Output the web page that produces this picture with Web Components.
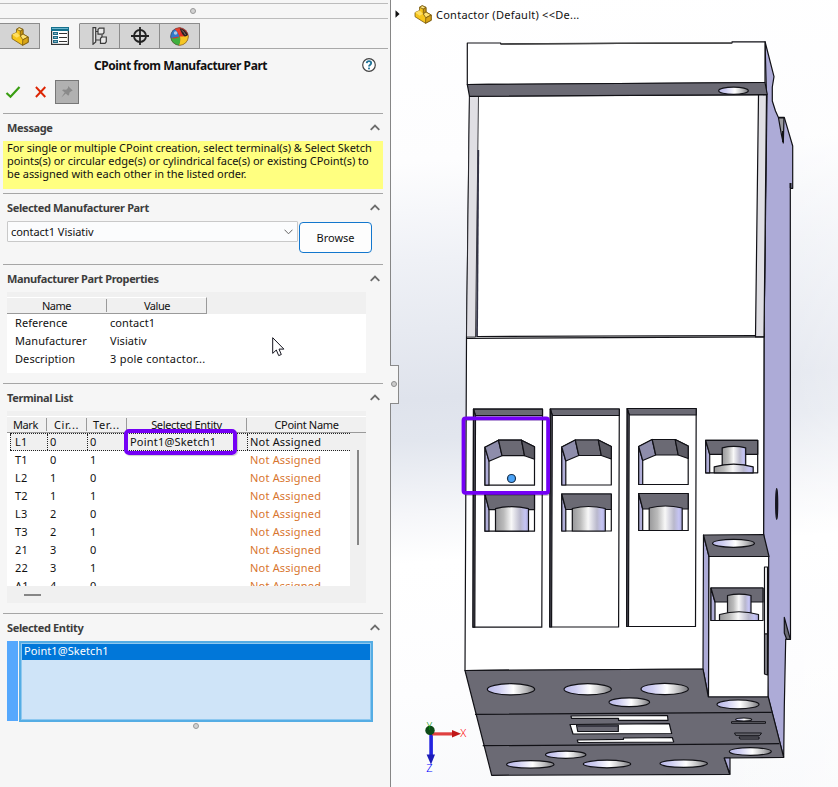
<!DOCTYPE html>
<html lang="en">
<head>
<meta charset="utf-8">
<title>Contactor</title>
<style>
body {
    margin: 0;
    width: 838px;
    height: 787px;
    overflow: hidden;
    font: 11px/13px "Noto Sans", "Open Sans", sans-serif;
    color: #111;
}
</style>
</head>
<body>
<cad-app>
    <property-manager slot="panel" heading="CPoint from Manufacturer Part">
        <panel-group heading="Message" style="height: 80px">
            <message-box>For single or multiple CPoint creation, select terminal(s) &amp; Select Sketch<br>points(s) or circular edge(s) or cylindrical face(s) or existing CPoint(s) to<br>be assigned with each other in the listed order.</message-box>
        </panel-group>
        <panel-group heading="Selected Manufacturer Part" style="height: 71px">
            <part-picker value="contact1 Visiativ"></part-picker>
        </panel-group>
        <panel-group heading="Manufacturer Part Properties" style="height: 119px">
            <part-properties></part-properties>
        </panel-group>
        <panel-group heading="Terminal List" style="height: 230px">
            <terminal-list></terminal-list>
        </panel-group>
        <panel-group heading="Selected Entity" style="height: 110px">
            <selection-box>Point1@Sketch1</selection-box>
        </panel-group>
    </property-manager>
    <model-view slot="view" name="Contactor (Default) &lt;&lt;De..."></model-view>
</cad-app>

<script>
const define = (name, html, setup) => {
    const template = document.createElement('template');
    template.innerHTML = html;

    customElements.define(name, class extends HTMLElement {
        constructor() {
            super();
            this.attachShadow({ mode: 'open' });
            this.shadowRoot.appendChild(template.content.cloneNode(true));
        }

        connectedCallback() {
            if (setup) setup(this, this.shadowRoot);
        }
    });
};

define('cad-app', `
<style>
:host {
    display: flex;
    position: relative;
    width: 838px;
    height: 787px;
}

.cursor {
    position: absolute;
    left: 272px;
    top: 337px;
}

.handle {
    position: absolute;
    left: 390px;
    top: 365px;
    width: 9px;
    height: 39px;
    box-sizing: border-box;
    background: #f6f6f6;
    border: 1px solid #8a8a8a;
    border-left: 0;
    display: flex;
    align-items: center;
    justify-content: center;
}

.handle i {
    width: 4px;
    height: 4px;
    border: 1px solid #8c8c8c;
    border-radius: 50%;
    background: #ccc;
    margin-top: -1px;
}
</style>
<slot name="panel"></slot>
<slot name="view"></slot>
<div class="handle"><i></i></div>
<svg class="cursor" width="14" height="21" viewBox="0 0 14 21">
    <path d="M.7.7V16.4L4.3 13 6.7 18.6 9.3 17.5 7 12.1H11.9Z" fill="#fff" stroke="#15151f" stroke-width="1"/>
</svg>
`);

/* yellow part with an L shaped step */
define('part-icon', `
<style>
:host { display: block; width: 18px; height: 19px; }
</style>
<svg width="18" height="19" viewBox="0 0 18 19" stroke="#7a5a10" stroke-width=".8" stroke-linejoin="round">
    <path d="M5.5 2.3 8.2.7 12 2.4V7L17.2 10V15.3L11.5 18.3 1 11.7V7.6L5.5 5.5Z" fill="#f6c51c"/>
    <path d="M5.5 2.3 8.2.7 12 2.4 9.3 4Z" fill="#ffe98a"/>
    <path d="M9.3 4 12 2.4V7L9.3 8.9Z" fill="#c79512"/>
    <path d="M9.3 8.9 12 7 17.2 10 11.8 12.8Z" fill="#ffe272"/>
    <path d="M11.8 12.8 17.2 10V15.3L11.5 18.3Z" fill="#d9a516"/>
    <path d="M1 7.6 5.5 5.5 9 8.8 5.7 10.8Z" fill="#ffdf62" stroke="none"/>
</svg>
`);

define('manager-tabs', `
<style>
:host {
    display: flex;
    height: 26px;
    width: 388px;
    box-sizing: border-box;
    margin-top: 4px;
    background: linear-gradient(#a9a9a9, #a9a9a9) 0 100% / 100% 1px no-repeat;
}

.tab {
    width: 40px;
    height: 26px;
    box-sizing: border-box;
    display: flex;
    align-items: center;
    justify-content: center;
    background: #d4d4d4;
    border: 1px solid #8c8c8c;
    border-left: 0;
}

.tab.active {
    background: #f6f6f6;
    border-top-color: #f6f6f6;
    border-bottom-color: #f6f6f6;
}
</style>
<div class="tab"><part-icon></part-icon></div>
<div class="tab active">
    <svg width="18" height="18" viewBox="0 0 18 18">
        <rect x=".6" y=".6" width="16.8" height="16.8" fill="#fff" stroke="#333" stroke-width="1.2"/>
        <rect x="0" y="0" width="18" height="4" fill="#14708d"/>
        <path d="M1 1.5H17" stroke="#6db6ce"/>
        <path d="M2.6 5.6H6.4V7.4H2.6ZM2.6 9.6H6.4V11.4H2.6ZM2.6 13.6H6.4V15.4H2.6Z" fill="#fff" stroke="#1d6a86" stroke-width="1.2"/>
        <path d="M8 6.5H16M8 10.5H16M8 14.5H16" stroke="#333"/>
    </svg>
</div>
<div class="tab">
    <svg width="16" height="18" viewBox="0 0 16 18" fill="#e9e9e9" stroke="#3b3b3b" stroke-width="1.2">
        <path d="M1 .7H3.7V15L1 17.3ZM3.7 4.5H7M3.7 13H8"/>
        <path d="M6 2.5 7.3 1.2H12V5.7L10.7 7.2H6ZM8.5 11.3 10 10H14.3V14.7L13 16.3H8.5Z"/>
        <path d="M10 8V10" fill="none"/>
    </svg>
</div>
<div class="tab">
    <svg width="18" height="18" viewBox="0 0 18 18" fill="none" stroke="#222" stroke-width="1.8">
        <circle cx="9" cy="9" r="6"/>
        <path d="M9 0V18M0 9H18"/>
    </svg>
</div>
<div class="tab">
    <svg width="19" height="19" viewBox="0 0 19 19">
        <circle cx="9.5" cy="9.5" r="9" fill="#e12f25"/>
        <path d="M9.5 9.5.6 11A9 9 0 0 1 5 1.8Q8 5 9.5 9.5Z" fill="#3179c8"/>
        <path d="M.6 10.7Q5 12.5 10 9.5 11.5 14 9 18.5A9 9 0 0 1 .6 10.7Z" fill="#3faf3d"/>
        <path d="M10 9.5Q15 10 18.4 8A9 9 0 0 1 9 18.5Q11 14 10 9.5Z" fill="#f5c624"/>
        <path d="M4.5 2A9 9 0 0 1 11 .6L10 9Q8 4 4.5 2Z" fill="#e8402f"/>
        <path d="M9.7 1.2Q15 2 18 7.6 17 9.4 14.8 9.5 12 8 9.7 1.2Z" fill="#282323"/>
        <path d="M11.5 3Q14.6 5 15.5 8" stroke="#8f6f6a" fill="none"/>
        <circle cx="5.6" cy="6" r="1.8" fill="#fff" opacity=".6"/>
        <circle cx="9.5" cy="9.5" r="8.8" fill="none" stroke="#444" stroke-width=".7" opacity=".7"/>
    </svg>
</div>
`);

define('property-manager', `
<style>
:host {
    display: flex;
    flex-direction: column;
    width: 391px;
    height: 787px;
    box-sizing: border-box;
    background: #f6f6f6;
    border-right: 1px solid #868686;
}

.grip {
    width: 388px;
    height: 16px;
    box-sizing: border-box;
    margin-top: 3px;
    padding-right: 2px;
    border-top: 1px solid #bcbcbc;
    border-bottom: 1px solid #bcbcbc;
    display: flex;
    align-items: center;
    justify-content: center;
}

.dot {
    width: 4px;
    height: 4px;
    border: 1px solid #999;
    border-radius: 50%;
    background: #d2d2d2;
}

.title {
    display: flex;
    align-items: center;
    height: 31px;
    padding: 1px 14px 0 0;
    box-sizing: border-box;
}

.title b {
    flex: 1;
    padding-left: 94px;
    font-size: 12px;
    letter-spacing: -.43px;
    white-space: nowrap;
}

.buttons {
    display: flex;
    align-items: center;
    height: 24px;
    padding-left: 5px;
    margin-bottom: 9px;
}

.pin {
    display: flex;
    align-items: center;
    justify-content: center;
    width: 24px;
    height: 24px;
    box-sizing: border-box;
    margin-left: 8px;
    background: #b1b1b1;
    border: 1px solid #777;
}

.groups {
    padding-left: 3px;
}

.end {
    align-self: center;
    margin: 0 0 0 2px;
}
</style>
<div class="grip"><i class="dot"></i></div>
<manager-tabs></manager-tabs>
<div class="title">
    <b></b>
    <svg width="14" height="14" viewBox="0 0 14 14">
        <circle cx="7" cy="7" r="6.3" fill="#fff" stroke="#444" stroke-width="1.2"/>
        <path d="M4.7 5.2Q4.9 3.2 7 3.2T9.2 5.1Q9.2 6.2 8 6.9 7 7.6 7 8.6" fill="none" stroke="#1f7398" stroke-width="1.8"/>
        <rect x="6.1" y="9.6" width="1.8" height="1.7" fill="#1f7398"/>
    </svg>
</div>
<div class="buttons">
    <svg width="16" height="14" viewBox="0 0 16 14"><path d="M1.5 8 5.5 11.7 14.5 2" fill="none" stroke="#3a9e12" stroke-width="2.2"/></svg>
    <svg width="12" height="12" viewBox="0 0 12 12" style="margin-left:14px"><path d="M.9 1 10.3 11M10.3 1 .9 11" stroke="#dd2503" stroke-width="1.9"/></svg>
    <div class="pin">
        <svg width="12" height="12" viewBox="0 0 12 12" fill="#8a8a8a"><path d="M7 0 11.7 4.5 10.3 5.2 8.5 6.4 8 9.3 7 9.6 4.7 7.4.4 11.6 3.7 6.3 1.2 4.5 2 3.6 5.2 3.8 7 2Z"/></svg>
    </div>
</div>
<div class="groups"><slot></slot></div>
<i class="dot end"></i>
`, (el, root) => {
    root.querySelector('b').textContent = el.getAttribute('heading');
});

define('panel-group', `
<style>
:host {
    display: block;
    width: 380px;
    box-sizing: border-box;
    border-top: 1px solid #a6a6a6;
}

header {
    display: flex;
    align-items: center;
    justify-content: space-between;
    height: 27px;
    padding: 0 3px 0 4px;
    box-sizing: border-box;
    font-weight: bold;
    letter-spacing: -.36px;
    color: #3d3d3d;
}
</style>
<header><span></span><svg width="10" height="7" viewBox="0 0 10 7"><path d="M.7 5.8 5 1.5 9.3 5.8" fill="none" stroke="#6c6c6c" stroke-width="1.8"/></svg></header>
<slot></slot>
`, (el, root) => {
    root.querySelector('span').textContent = el.getAttribute('heading');
});

define('message-box', `
<style>
:host {
    display: block;
    height: 48px;
    padding: 0 0 0 4px;
    box-sizing: border-box;
    background: #ffff80;
    letter-spacing: -.03px;
    white-space: nowrap;
}
</style>
<slot></slot>
`);

define('part-picker', `
<style>
:host {
    display: flex;
    align-items: flex-start;
    gap: 1px;
    padding-left: 4px;
}

.select {
    display: flex;
    align-items: center;
    justify-content: space-between;
    width: 291px;
    height: 21px;
    padding: 0 4px 0 3px;
    box-sizing: border-box;
    border: 1px solid #c9c9c9;
    border-radius: 1px;
    background: #fbfcfd;
    letter-spacing: -.05px;
}

.browse {
    width: 73px;
    height: 31px;
    margin-top: 1px;
    box-sizing: border-box;
    border: 1px solid #1377cd;
    border-radius: 4px;
    background: #fdfdfd;
    text-align: center;
    line-height: 30px;
}
</style>
<div class="select"><span></span><svg width="9" height="6" viewBox="0 0 9 6"><path d="M.5.7 4.5 4.8 8.5.7" fill="none" stroke="#666"/></svg></div>
<div class="browse">Browse</div>
`, (el, root) => {
    root.querySelector('span').textContent = el.getAttribute('value');
});

define('part-properties', `
<style>
:host {
    display: block;
    width: 359px;
    height: 81px;
    margin-left: 4px;
    box-sizing: border-box;
    padding-top: 5px;
    background: linear-gradient(#f0f0f0 22px, #fff 22px);
}

.head, .row {
    display: grid;
    grid-template-columns: 100px 100px;
}

.head {
    width: 200px;
    height: 17px;
    box-sizing: border-box;
    border-top: 1px solid #fff;
    border-bottom: 1px solid #9a9a9a;
    border-right: 1px solid #9a9a9a;
    text-align: center;
    letter-spacing: -.45px;
    line-height: 16px;
}

.head span:first-child {
    border-right: 1px solid #9a9a9a;
    height: 13px;
    margin-top: 1px;
    line-height: 14px;
}

.row {
    height: 18px;
    letter-spacing: .08px;
    line-height: 18px;
    white-space: nowrap;
}

.row span:first-child { padding-left: 8px; }
.row span + span { padding-left: 3px; }
.row:last-child span + span { letter-spacing: .24px; }
</style>
<div class="head"><span>Name</span><span>Value</span></div>
<div class="row"><span>Reference</span><span>contact1</span></div>
<div class="row"><span>Manufacturer</span><span>Visiativ</span></div>
<div class="row"><span>Description</span><span>3 pole contactor...</span></div>
`);

const terminals = [
    ['L1', 0, 0], ['T1', 0, 1], ['L2', 1, 0], ['T2', 1, 1], ['L3', 2, 0],
    ['T3', 2, 1], ['21', 3, 0], ['22', 3, 1], ['A1', 4, 0],
];

define('terminal-list', `
<style>
:host {
    display: block;
    position: relative;
    width: 359px;
    height: 192px;
    margin-left: 4px;
    padding-top: 5px;
    box-sizing: border-box;
    background: #f0f0f0;
}

.head, .row {
    display: grid;
    grid-template-columns: 40px 40px 40px 120px 119px;
    white-space: nowrap;
}

.head {
    height: 17px;
    box-sizing: border-box;
    border-top: 1px solid #fff;
    border-bottom: 1px solid #9a9a9a;
    text-align: center;
    letter-spacing: -.33px;
    line-height: 14px;
}

.head span {
    height: 13px;
    margin-top: 1px;
    border-right: 1px solid #9a9a9a;
}

.head span:first-child { padding-right: 2px; }
.head span:nth-child(2), .head span:nth-child(3) { letter-spacing: .6px; }
.head span:last-child { border: 0; }

.rows {
    width: 343px;
    height: 153px;
    overflow: hidden;
    background: #fff;
}

.row {
    height: 18px;
    letter-spacing: .2px;
    line-height: 18px;
}

.row span { padding-left: 3px; }
.row span:first-child { padding-left: 8px; }
.row span:last-child { color: #d8762f; }

.row.selected {
    margin-left: 3px;
    grid-template-columns: 37px 40px 40px 120px 103px;
    height: 18px;
    box-sizing: border-box;
    background: #f0f0f0;
    border-top: 1px dotted #222;
    border-bottom: 1px dotted #222;
    line-height: 15px;
}

.row.selected span { border-left: 1px dotted #222; padding-left: 2px; }
.row.selected span:first-child { padding-left: 4px; }
.row.selected span:last-child { color: #111; }

.vbar, .hbar, .mark { position: absolute; }

.vbar {
    left: 350px;
    top: 39px;
    width: 2px;
    height: 95px;
    background: #868686;
}

.hbar {
    left: 17px;
    top: 183px;
    width: 17px;
    height: 2px;
    background: #868686;
}

.mark {
    left: 117px;
    top: 18px;
    width: 113px;
    height: 26px;
    box-sizing: border-box;
    border: 4px solid #7400f5;
    border-radius: 5px;
    box-shadow: 1px 1px 1px #0003;
}
</style>
<div class="head"><span>Mark</span><span>Cir...</span><span>Ter...</span><span>Selected Entity</span><span>CPoint Name</span></div>
<div class="rows"></div>
<div class="vbar"></div>
<div class="hbar"></div>
<div class="mark"></div>
`, (el, root) => {
    root.querySelector('.rows').innerHTML = terminals.map(([mark, circuit, terminal], i) => `
        <div class="row${i ? '' : ' selected'}"><span>${mark}</span><span>${circuit}</span><span>${terminal}</span><span>${i ? '' : 'Point1@Sketch1'}</span><span>Not Assigned</span></div>
    `).join('');
});

define('selection-box', `
<style>
:host {
    display: flex;
    gap: 1px;
    height: 81px;
    padding-left: 4px;
}

.bar {
    width: 11px;
    height: 80px;
    background: #55a8fd;
}

.list {
    width: 354px;
    height: 81px;
    box-sizing: border-box;
    border: 2px solid #55ade4;
    box-shadow: inset 0 0 0 1px #8ec8f0;
    background: #cfe4f8;
    padding: 1px;
}

.item {
    height: 16px;
    padding-left: 2px;
    letter-spacing: .08px;
    line-height: 13px;
    background: #0177d9;
    color: #fff;
}
</style>
<div class="bar"></div>
<div class="list"><div class="item"><slot></slot></div></div>
`);

const hole = (cx, cy, rx, ry) => `<ellipse cx="${cx}" cy="${cy}" rx="${rx}" ry="${ry}" fill="url(#hole)"/>`;

const pole = (x, y) => `
<g transform="translate(${x} ${y})">
    <path d="M0 0H69L68.3 218H-.5Z" fill="#fff"/>
    <path d="M0 0H69V6.5H2Z" fill="#6b6a74"/>
    <path d="M0 0 2 6.5 1.3 218H-.5Z" fill="#55545f"/>
    <path d="M11.5 38 25 31H48L61 37.5V76H11.5Z" fill="#fff"/>
    <path d="M11.5 38 15.5 52V76H11.5Z" fill="#b0aed8"/>
    <path d="M11.5 38 25 31 28.5 46.5 15.5 52Z" fill="#8e8dab"/>
    <path d="M25 31H48L51 46.5H28.5Z" fill="#6b6a74"/>
    <path d="M48 31 61 37.5V50L51 46.5Z" fill="#5c5b64"/>
    <path d="M11.5 85H61V122H11.5Z" fill="#fff"/>
    <path d="M11.5 85 15.5 100.5V122H11.5Z" fill="#b0aed8"/>
    <path d="M11.5 85H61V100.5H15.5Z" fill="#6b6a74"/>
    <path d="M22 122V99.5Q38 95.5 55 99.5V122Z" fill="url(#screw)"/>
</g>`;

const coil = (x, y) => `
<g transform="translate(${x} ${y})">
    <path d="M0 0H52V32.5H0Z" fill="#fff"/>
    <path d="M0 0 4 14V32.5H0Z" fill="#b0aed8"/>
    <path d="M0 0H52V14H4Z" fill="#6b6a74"/>
    <path d="M16.5 25V7.5Q28 4.8 40 7.5V25Z" fill="url(#screw)"/>
    <path d="M8.5 32.5V26.5Q28 21 47.5 26.5V32.5Z" fill="url(#screw)"/>
</g>`;

define('model-view', `
<style>
:host {
    display: block;
    position: relative;
    width: 447px;
    height: 787px;
    background:
        linear-gradient(90deg, #fff0 70%, #fff5),
        linear-gradient(176deg, #fff 0, #fdfdfe 20%, #eff1f6 32%, #dfe3ec 49%, #e2e6ee 54%, #f5f6f9 63%, #fff 69%, #fdfdfe 85%, #f8f9fb 100%);
}

.tree {
    position: absolute;
    left: 4px;
    top: 4px;
    display: flex;
    align-items: center;
    height: 20px;
    letter-spacing: .25px;
    white-space: nowrap;
}

.tree part-icon { margin: 0 4px 0 14px; }

.model { display: block; }
</style>
<svg class="model" width="447" height="787" viewBox="391 0 447 787" stroke="#111116" stroke-width="1.2" stroke-linejoin="round">
    <defs>
        <linearGradient id="hole">
            <stop offset="0" stop-color="#b9b8e8"/>
            <stop offset=".25" stop-color="#d0cff2"/>
            <stop offset=".55" stop-color="#fff"/>
            <stop offset=".8" stop-color="#bcbcbe"/>
            <stop offset="1" stop-color="#77777c"/>
        </linearGradient>
        <linearGradient id="screw">
            <stop offset="0" stop-color="#98989a"/>
            <stop offset=".25" stop-color="#bbb"/>
            <stop offset=".48" stop-color="#f8f8f8"/>
            <stop offset=".75" stop-color="#b9b8cc"/>
            <stop offset=".9" stop-color="#c5c4f4"/>
            <stop offset="1" stop-color="#a9a8d8"/>
        </linearGradient>
    </defs>

    <!-- right flank -->
    <path d="M765 41.5 774 76.7 772.3 87V101L775.5 111 778.3 117.3H784.3L792.7 146V188.3H790.3L790.5 639.3 785.7 639 784.3 707 783.7 757.3 768 697 763.5 535 764 337 766.5 95Z" fill="#adabd7"/>
    <path d="M778.5 118H784L783.3 143 781.3 134Z" fill="#9a9a9e"/>
    <path d="M783 131V142M790.5 183V188" stroke-width="2"/>
    <path d="M784.3 617.3 790.3 639.3H786.7L784.3 633Z" fill="#6b6a74"/>
    <ellipse cx="776.7" cy="504" rx="1" ry="15.5" fill="#18182a"/>

    <!-- front face -->
    <path d="M469.5 96 466.5 338.5 465 670.5 703.5 669 763.5 600 764 337 767 95Z" fill="#fff"/>
    <path d="M469.5 96H478.5L475.5 337H466.5Z" fill="#e0dfe4" stroke-width=".8"/>
    <path d="M758.5 95H766.5L764 337H755.5Z" fill="#e0dfe4"/>
    <path d="M478.3 150 477 337" fill="none" stroke="#333346" stroke-width="1.8"/>
    <path d="M466.5 338.3 764 336.8M477 336.5 755.5 335.5" fill="none"/>
    <path d="M467.3 43H500.7V44L732 43V41.8H765V82.5L467.3 84.5Z" fill="#fff"/>
    <path d="M501 44 620 43.3 732 43" fill="none" stroke="#444" stroke-width="1.6"/>
    <path d="M467.3 84.5 765 82.5 767.3 94.5 469.5 96.3Z" fill="#6b6a74"/>
    ${hole(733.5, 90.7, 14.8, 3.6)}
    ${pole(473.5, 409.2)}${pole(550.3, 409)}${pole(627.2, 408.5)}
    ${coil(705.7, 440.3)}

    <!-- side block -->
    <path d="M703.5 535 709 556.5 708.5 697 703 669Z" fill="#adabd7"/>
    <path d="M709 556.5H768.7L768 697H708.5Z" fill="#fff"/>
    <path d="M703.5 535 763.7 534.5 769 556.5H709Z" fill="#6b6a74"/>
    ${hole(733.5, 543.3, 21, 4)}
    <path d="M764.5 567H767.5V634H764.5Z" fill="#fff"/>
    <path d="M764.5 634H767.5V675L764.5 674Z" fill="#87878d"/>
    ${coil(711, 588)}

    <!-- underside -->
    <path d="M465 670.5 703 669 708.3 697H768.3L783.7 757.3 724.3 758 729.7 774.3 491.7 775.3Z" fill="#6b6a74"/>
    <path d="M724.3 758H730V774.3Z" fill="#adabd7"/>
    <path d="M475 714.3 771.7 712.3M482.7 745.7 779.3 743.7" fill="none"/>
    ${hole(511, 689.3, 23.7, 5.6)}${hole(587.7, 689.3, 23.7, 5.6)}${hole(664.7, 689, 23.7, 5.6)}
    ${hole(629.3, 702.3, 20.3, 4.4)}${hole(738, 704.4, 21, 4.4)}
    ${hole(565.7, 754.7, 20.2, 3.6)}${hole(750.3, 751.5, 21, 3.9)}
    ${hole(530.3, 764.4, 23.7, 3.8)}${hole(607, 764, 23.7, 3.8)}${hole(683.7, 763.6, 23.7, 3.8)}
    <g fill="#fff">
        <path d="M571 716 667.5 715.5 668 720.3H618.5V718.3H571.5Z"/>
        <path d="M570 724.5 669.3 723.7 671.7 733.5 573 734Z"/>
        <path d="M576.5 725H618.3V731.5H577.7Z" fill="#6b6a74"/>
        <path d="M577.5 726.3H618" stroke="#393844"/>
        <path d="M577.3 740 623.5 739.3V738L672.3 737.5 673.7 742 578 742.5Z"/>
    </g>
    ${hole(743.7, 719.5, 8, 1.5)}
    <path d="M731.5 721.7H765.5V723.3H731.5ZM734.5 733H761.5L760 735.3H735.7ZM739 737H759V739H740Z" fill="#77777f" stroke-width="1"/>

    <!-- sketch point and its highlight -->
    <circle cx="511.5" cy="478.5" r="4" fill="#4ba3f7" stroke="#18324f"/>
    <rect x="464.5" y="419.5" width="85" height="75" rx="3" fill="none" stroke="#0003" stroke-width="3"/>
    <rect x="463.5" y="418.3" width="84.6" height="74.5" rx="2" fill="none" stroke="#7400f5" stroke-width="3.8"/>

    <!-- triad -->
    <g stroke="none">
        <rect x="429.3" y="734" width="3.6" height="22" fill="#2323e0"/>
        <path d="M426.6 754.5H435L431 764.5Z" fill="#1c1cb8"/>
        <rect x="432" y="732.3" width="21" height="3.2" fill="#e04040"/>
        <path d="M452 730 461 733.8 452 737.6Z" fill="#c01818"/>
        <circle cx="430" cy="730.4" r="4.7" fill="#0d4a17"/>
    </g>
    <g stroke="none" font-size="11" font-weight="300" font-family="Noto Sans, sans-serif">
        <text x="460.3" y="737" fill="#f00">X</text>
        <text x="426.7" y="729.5" fill="#0a9a0a" font-size="10">Y</text>
        <text x="426.3" y="771.5" fill="#00f">Z</text>
    </g>
</svg>
<div class="tree">
    <svg width="5" height="8" viewBox="0 0 5 8"><path d="M.5.3 4.6 4 .5 7.7Z" fill="#111"/></svg>
    <part-icon></part-icon>
    <span></span>
</div>
`, (el, root) => {
    root.querySelector('span').textContent = el.getAttribute('name');
});
</script>
</body>
</html>
